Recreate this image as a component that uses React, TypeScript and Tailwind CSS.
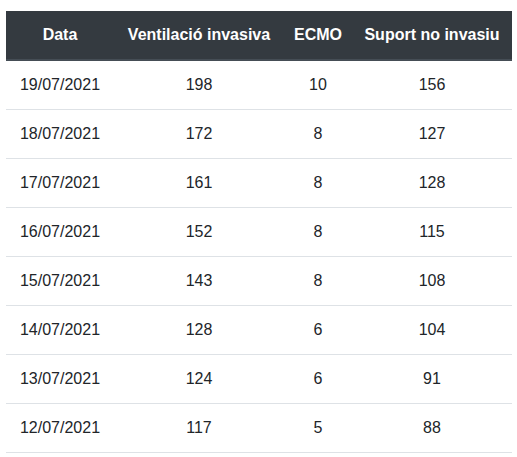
import React from "react";

const rows = [
  ["19/07/2021", "198", "10", "156"],
  ["18/07/2021", "172", "8", "127"],
  ["17/07/2021", "161", "8", "128"],
  ["16/07/2021", "152", "8", "115"],
  ["15/07/2021", "143", "8", "108"],
  ["14/07/2021", "128", "6", "104"],
  ["13/07/2021", "124", "6", "91"],
  ["12/07/2021", "117", "5", "88"],
];

export default function App() {
  return (
    <div
      className="w-[517px] h-[457px] bg-white pt-[11px] px-[6px] overflow-hidden"
      style={{ fontFamily: '"Liberation Sans", Arial, sans-serif' }}
    >
      <table className="w-[506px] border-collapse table-fixed text-[16px] leading-6 text-[#212529]">
        <colgroup>
          <col className="w-[108px]" />
          <col className="w-[170px]" />
          <col className="w-[68px]" />
          <col className="w-[160px]" />
        </colgroup>
        <thead>
          <tr className="bg-[#343a40] text-white">
            {["Data", "Ventilació invasiva", "ECMO", "Suport no invasiu"].map((h) => (
              <th
                key={h}
                className="font-bold text-center py-3 px-0 whitespace-nowrap border-b-2 border-[#454d55]"
              >
                {h}
              </th>
            ))}
          </tr>
        </thead>
        <tbody>
          {rows.map((r) => (
            <tr key={r[0]} className="border-b border-[#dee2e6]">
              {r.map((c, i) => (
                <td key={i} className="text-center py-3 px-0 whitespace-nowrap">
                  {c}
                </td>
              ))}
            </tr>
          ))}
        </tbody>
      </table>
    </div>
  );
}
